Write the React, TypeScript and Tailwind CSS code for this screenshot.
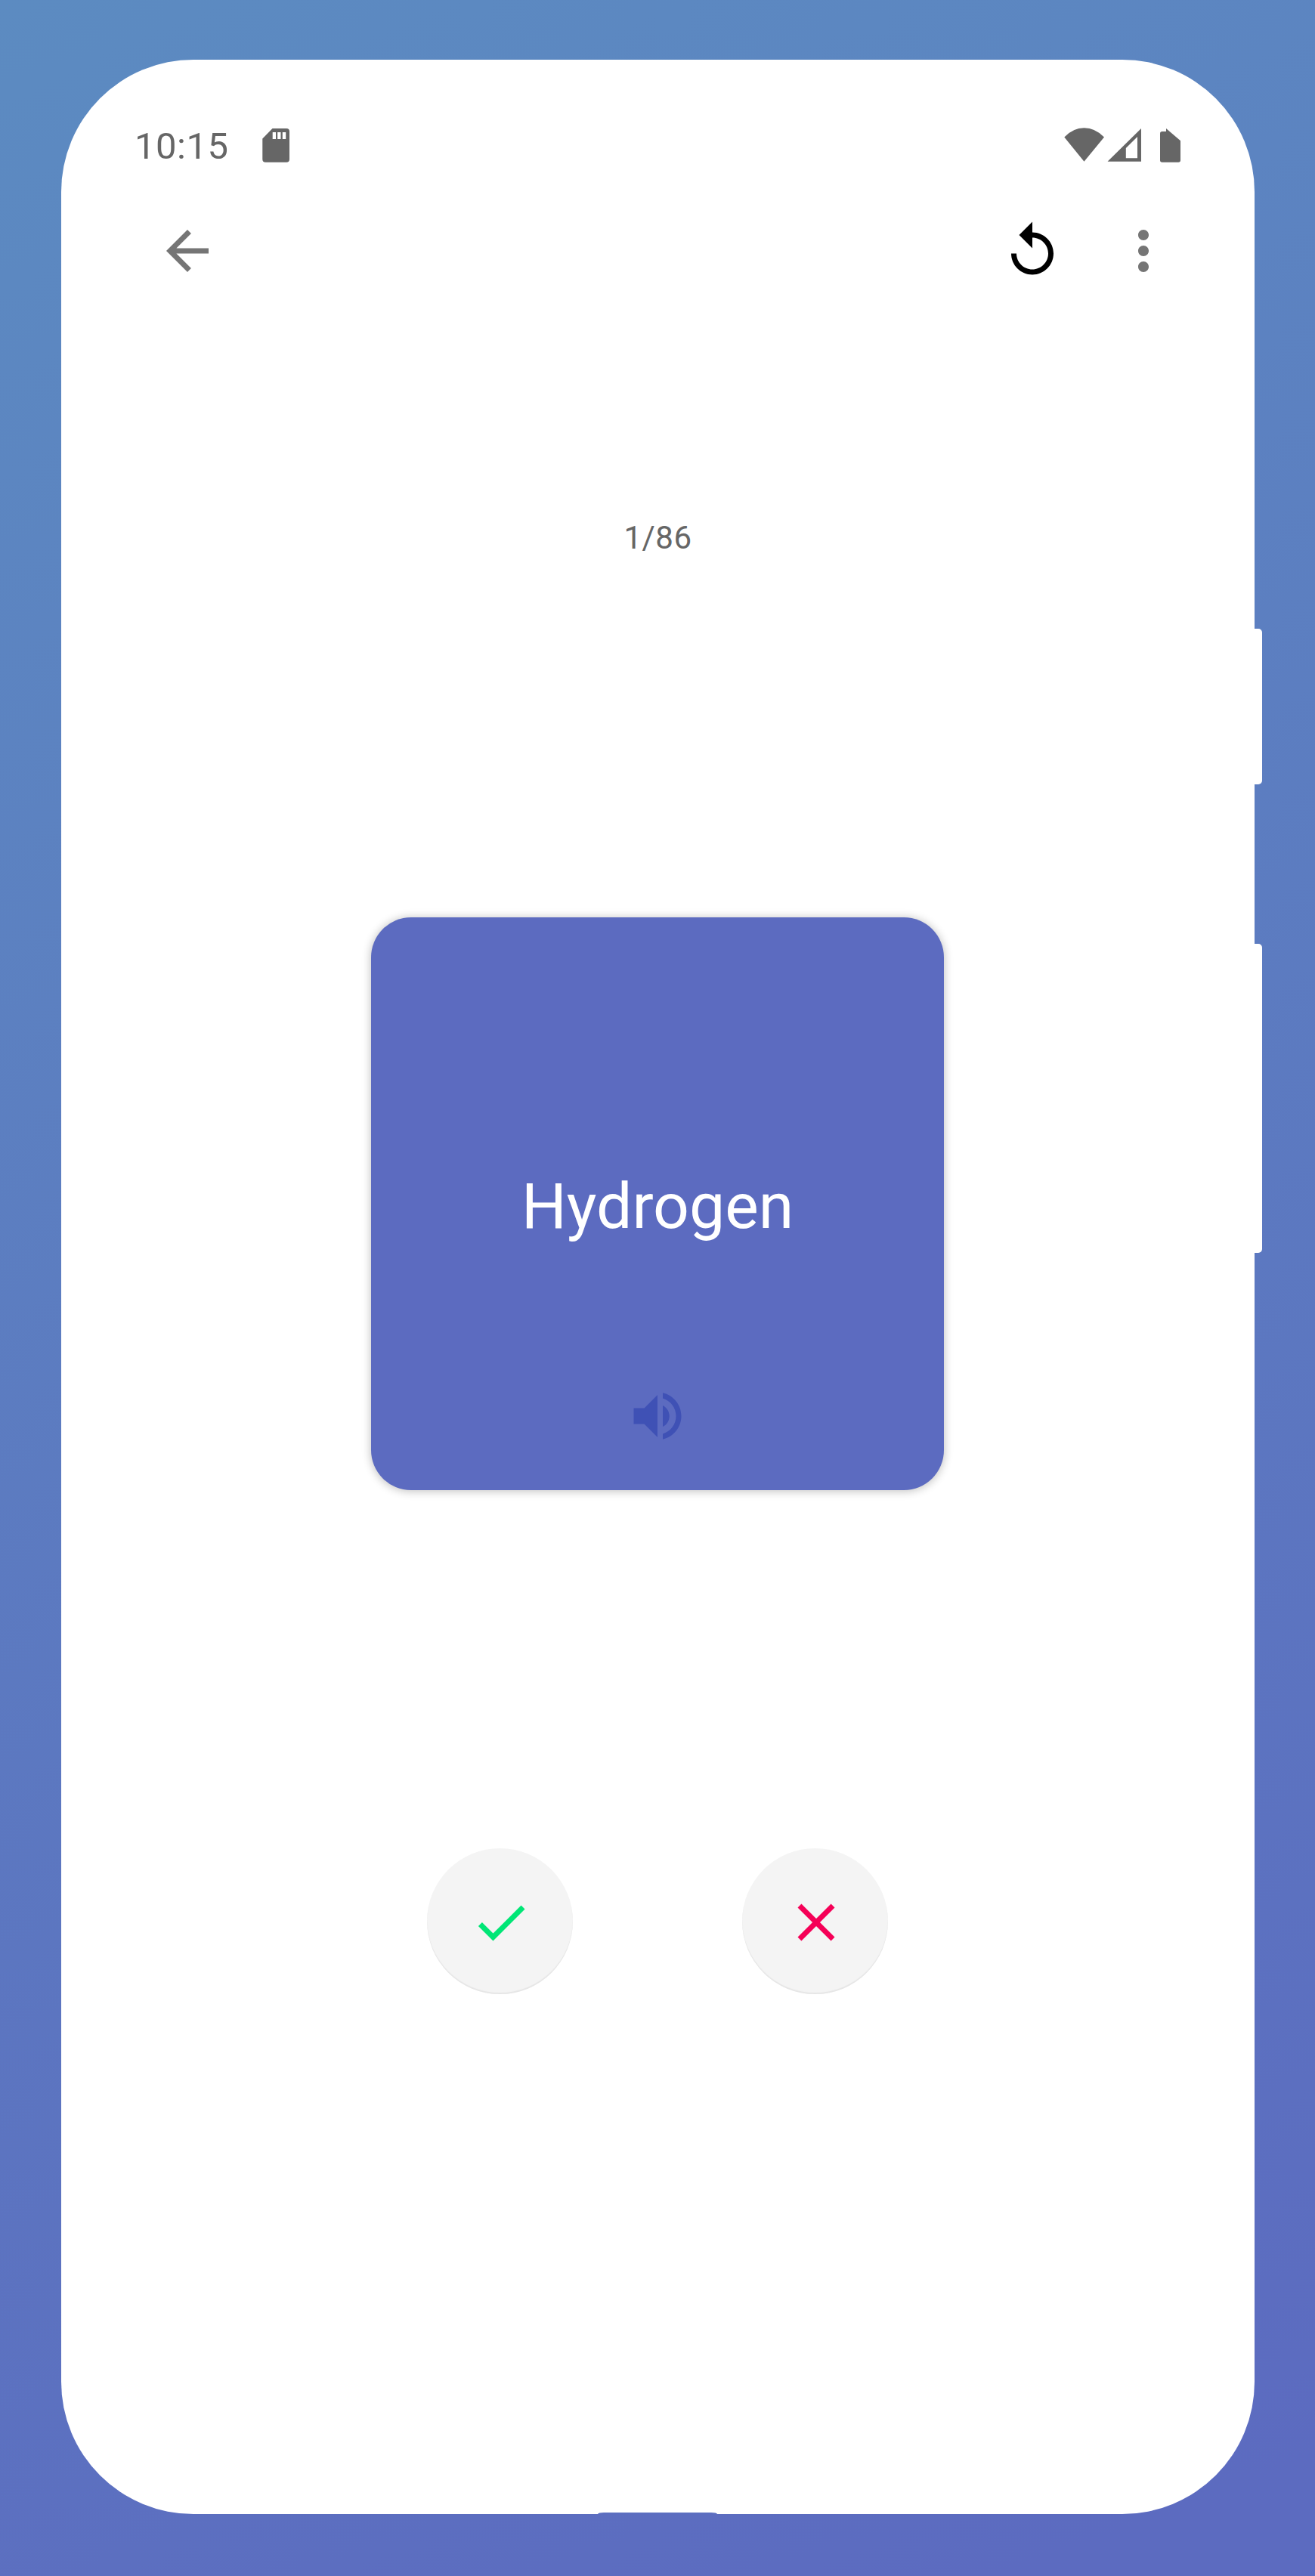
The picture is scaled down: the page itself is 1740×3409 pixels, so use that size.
import React from "react";

type IconProps = { d: string; className?: string };

function Icon({ d, className = "" }: IconProps) {
  return (
    <svg viewBox="0 0 24 24" fill="currentColor" className={`size-[84px] shrink-0 ${className}`}>
      <path d={d} />
    </svg>
  );
}

const ICONS = {
  back: "M20 11H7.83l5.59-5.59L12 4l-8 8 8 8 1.41-1.41L7.83 13H20v-2z",
  replay: "M12 5V1L7 6l5 5V7c3.31 0 6 2.69 6 6s-2.69 6-6 6-6-2.69-6-6H4c0 4.42 3.58 8 8 8s8-3.58 8-8-3.58-8-8-8z",
  more: "M12 8c1.1 0 2-.9 2-2s-.9-2-2-2-2 .9-2 2 .9 2 2 2zm0 2c-1.1 0-2 .9-2 2s.9 2 2 2 2-.9 2-2-.9-2-2-2zm0 6c-1.1 0-2 .9-2 2s.9 2 2 2 2-.9 2-2-.9-2-2-2z",
  volume: "M3 9v6h4l5 5V4L7 9H3zm13.5 3c0-1.77-1.02-3.29-2.5-4.03v8.05c1.48-.73 2.5-2.25 2.5-4.02zM14 3.23v2.06c2.89.86 5 3.54 5 6.71s-2.11 5.85-5 6.71v2.06c4.01-.91 7-4.49 7-8.77s-2.99-7.86-7-8.77z",
  check: "M9 16.17L4.83 12l-1.42 1.41L9 19 21 7l-1.41-1.41z",
  close: "M19 6.41L17.59 5 12 10.59 6.41 5 5 6.41 10.59 12 5 17.59 6.41 19 12 13.41 17.59 19 19 17.59 13.41 12z",
};

function StatusBar() {
  return (
    <div className="flex h-[54px] items-start justify-between pr-[98px] pl-[97px] text-[#666666]">
      <div className="flex items-start">
        <span className="w-[169px] text-[49px] leading-[58px] tracking-[0.5px]">10:15</span>
        <svg viewBox="0 0 36 45" className="mt-[5px] h-[45px] w-9" fill="currentColor">
          <path
            fillRule="evenodd"
            d="M13.5 0H32a4 4 0 0 1 4 4v36.700a4 4 0 0 1-4 4H4.300a4 4 0 0 1-4-4V13.500zM13.700 5v9h4.300V5zM20.200 5v9h4.300V5zM26.800 5v9h4.400V5z"
          />
        </svg>
      </div>
      <div className="mt-1 flex items-start">
        <svg viewBox="0 0 54 46" className="h-[46px] w-[54px]" fill="currentColor">
          <path d="M0.300 12.500Q12 0.300 26.500 0.300T53 12.500L26.500 44.800z" />
        </svg>
        <svg viewBox="0 0 45 46" className="ml-[3px] h-[46px] w-[45px]" fill="currentColor">
          <path fillRule="evenodd" d="M0.500 44.800L45 1v43.800zM24.800 27v13.300H40V12z" />
        </svg>
        <svg viewBox="0 0 27 46" className="ml-[25px] h-[46px] w-[27px]" fill="currentColor">
          <path d="M8 1L27 17.200V43q0 2.700-2.700 2.700H2.700Q0 45.700 0 43V7.700Q0 5 2.700 5H8z" />
        </svg>
      </div>
    </div>
  );
}

function Toolbar() {
  return (
    <div className="mt-[71px] flex h-[84px] items-center pl-[125px] text-[#757575]">
      <Icon d={ICONS.back} />
      <Icon d={ICONS.replay} className="ml-[1034px] text-black" />
      <Icon d={ICONS.more} className="ml-[63px]" />
    </div>
  );
}

function AnswerButton({ d, className }: { d: string; className: string }) {
  return (
    <button
      className={`flex size-[193px] items-center justify-center rounded-full bg-[#f4f4f4] pt-[3px] pl-[3px] shadow-[inset_0_-2px_1px_#e6e6e6] ${className}`}
    >
      <Icon d={d} />
    </button>
  );
}

export default function App() {
  return (
    <div className="h-[3409px] w-[1740px] overflow-hidden bg-[linear-gradient(158deg,#5c8bc1_0%,#5c6bc0_96%)] pt-[79px] pl-[81px] font-[Roboto,sans-serif]">
      <div className="relative flex h-[3248px] w-[1579px] flex-col rounded-[175px] bg-white pt-[86px]">
        <StatusBar />
        <Toolbar />
        <div className="mt-[308px] text-center text-[42px] leading-[60px] tracking-[0.5px] text-[#666666]">1/86</div>
        <div className="mt-[472px] ml-[410px] flex size-[758px] flex-col items-center rounded-[53px] bg-[#5c6bc0] pt-[333px] shadow-[0_1px_12px_1px_rgba(0,0,0,0.23)]">
          <span className="text-[84px] leading-[100px] text-white">Hydrogen</span>
          <Icon d={ICONS.volume} className="mt-[185px] text-[#3f51b5]" />
        </div>
        <div className="mt-[474px] ml-[484px] flex gap-[224px]">
          <AnswerButton d={ICONS.check} className="text-[#00e676]" />
          <AnswerButton d={ICONS.close} className="text-[#f50057]" />
        </div>
        <div className="absolute top-[753px] left-full h-[206px] w-[10px] rounded-r-[5px] bg-white" />
        <div className="absolute top-[1170px] left-full h-[409px] w-[10px] rounded-r-[5px] bg-white" />
        <div className="absolute bottom-0 left-[710px] h-[2px] w-[158px] rounded-t-[8px_2px] bg-[#5c6fc0]" />
      </div>
    </div>
  );
}
